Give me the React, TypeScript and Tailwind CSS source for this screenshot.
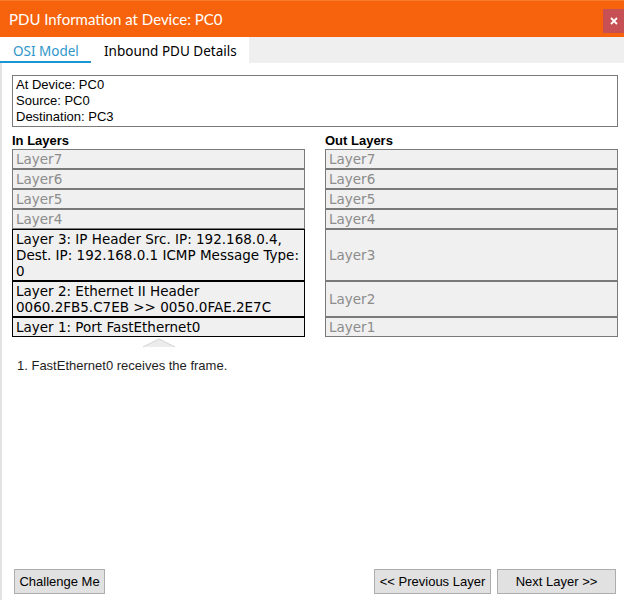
import React from 'react';

interface LayerRowProps {
  text: string;
  active?: boolean;
  height: string;
}

function LayerRow({ text, active, height }: LayerRowProps) {
  return (
    <div
      className={`${height} flex items-center border bg-[#f0f0f0] px-[3px] font-['DejaVu_Sans',Verdana,sans-serif] text-[13.5px] leading-[16px] ${
        active ? 'border-black text-black' : 'border-[#7a7a7a] text-[#8c8c8c]'
      }`}
    >
      <span>{text}</span>
    </div>
  );
}

const inLayers: LayerRowProps[] = [
  { text: 'Layer7', height: 'h-[20px]' },
  { text: 'Layer6', height: 'h-[20px]' },
  { text: 'Layer5', height: 'h-[20px]' },
  { text: 'Layer4', height: 'h-[20px]' },
  { text: 'Layer 3: IP Header Src. IP: 192.168.0.4, Dest. IP: 192.168.0.1 ICMP Message Type: 0', height: 'h-[52px]', active: true },
  { text: 'Layer 2: Ethernet II Header 0060.2FB5.C7EB >> 0050.0FAE.2E7C', height: 'h-[36px]', active: true },
  { text: 'Layer 1: Port FastEthernet0', height: 'h-[20px]', active: true },
];

const outLayers: LayerRowProps[] = [
  { text: 'Layer7', height: 'h-[20px]' },
  { text: 'Layer6', height: 'h-[20px]' },
  { text: 'Layer5', height: 'h-[20px]' },
  { text: 'Layer4', height: 'h-[20px]' },
  { text: 'Layer3', height: 'h-[52px]' },
  { text: 'Layer2', height: 'h-[36px]' },
  { text: 'Layer1', height: 'h-[20px]' },
];

export default function App() {
  const arial = "font-['Liberation_Sans',Arial,sans-serif]";

  return (
    <div className="w-[624px] h-[600px] bg-white flex flex-col overflow-hidden">
      {/* title bar */}
      <div className="h-[37px] bg-[#f7630c] border-t border-[#f97a2a] flex justify-between">
        <div className="pl-[9px] pt-[7px] text-white text-[15px] leading-[22px] font-['Lato',sans-serif]">
          PDU Information at Device: PC0
        </div>
        <div className="mt-[8px] w-[21px] h-[24px] bg-[#c65053] flex items-center justify-center">
          <svg width="8" height="8" viewBox="0 0 8 8">
            <path d="M1 1 L7 7 M7 1 L1 7" stroke="white" strokeWidth="1.8" />
          </svg>
        </div>
      </div>

      {/* tabs */}
      <div className="h-[26px] bg-[#efefef] flex font-['Noto_Sans',sans-serif] text-[13.5px]">
        <div className="w-[91px] bg-white flex flex-col">
          <div className="flex-1 pl-[13px] pt-[4px] text-[#2e96ca]">OSI Model</div>
          <div className="h-[3px] bg-[#1a96d2]" />
        </div>
        <div className="w-[158px] bg-white pl-[13px] pt-[4px] text-black">Inbound PDU Details</div>
      </div>

      {/* content */}
      <div className="flex-1 flex flex-col border-l-2 border-[#e2e2e2] pl-[10px] pr-[6px] pt-[12px] pb-[6px]">
        <div className={`h-[52px] border border-[#7a7a7a] px-[3px] pt-[1px] ${arial} text-[13px] leading-[16px] text-black`}>
          <div>At Device: PC0</div>
          <div>Source: PC0</div>
          <div>Destination: PC3</div>
        </div>

        <div className="mt-[6px] grid grid-cols-2 gap-x-[20px]">
          <div className="flex flex-col">
            <div className={`${arial} font-bold text-[13px] leading-[16px] text-black`}>In Layers</div>
            {inLayers.map((l) => (
              <LayerRow key={l.text} {...l} />
            ))}
            <div className="flex justify-center">
              <svg width="34" height="11" viewBox="0 0 34 11">
                <polygon points="1,10 17,2 33,10" fill="#ececec" />
                <polyline points="1,10 17,2 33,10" fill="none" stroke="#d4d4d4" strokeWidth="1" />
              </svg>
            </div>
          </div>
          <div className="flex flex-col">
            <div className={`${arial} font-bold text-[13px] leading-[16px] text-black`}>Out Layers</div>
            {outLayers.map((l) => (
              <LayerRow key={l.text} {...l} />
            ))}
          </div>
        </div>

        <div className={`mt-[10px] pl-[5px] ${arial} text-[13px] leading-[16px] text-[#1e1e1e]`}>
          1. FastEthernet0 receives the frame.
        </div>

        <div className={`mt-auto flex items-end justify-between ${arial} text-[13px] text-black`}>
          <button className="ml-[2px] h-[25px] w-[91px] bg-[#e1e1e1] border border-[#adadad]">Challenge Me</button>
          <div className="flex gap-[6px] mr-[2px]">
            <button className="h-[25px] w-[117px] bg-[#e1e1e1] border border-[#adadad]">&lt;&lt; Previous Layer</button>
            <button className="h-[25px] w-[119px] bg-[#e1e1e1] border border-[#adadad]">Next Layer &gt;&gt;</button>
          </div>
        </div>
      </div>
    </div>
  );
}
